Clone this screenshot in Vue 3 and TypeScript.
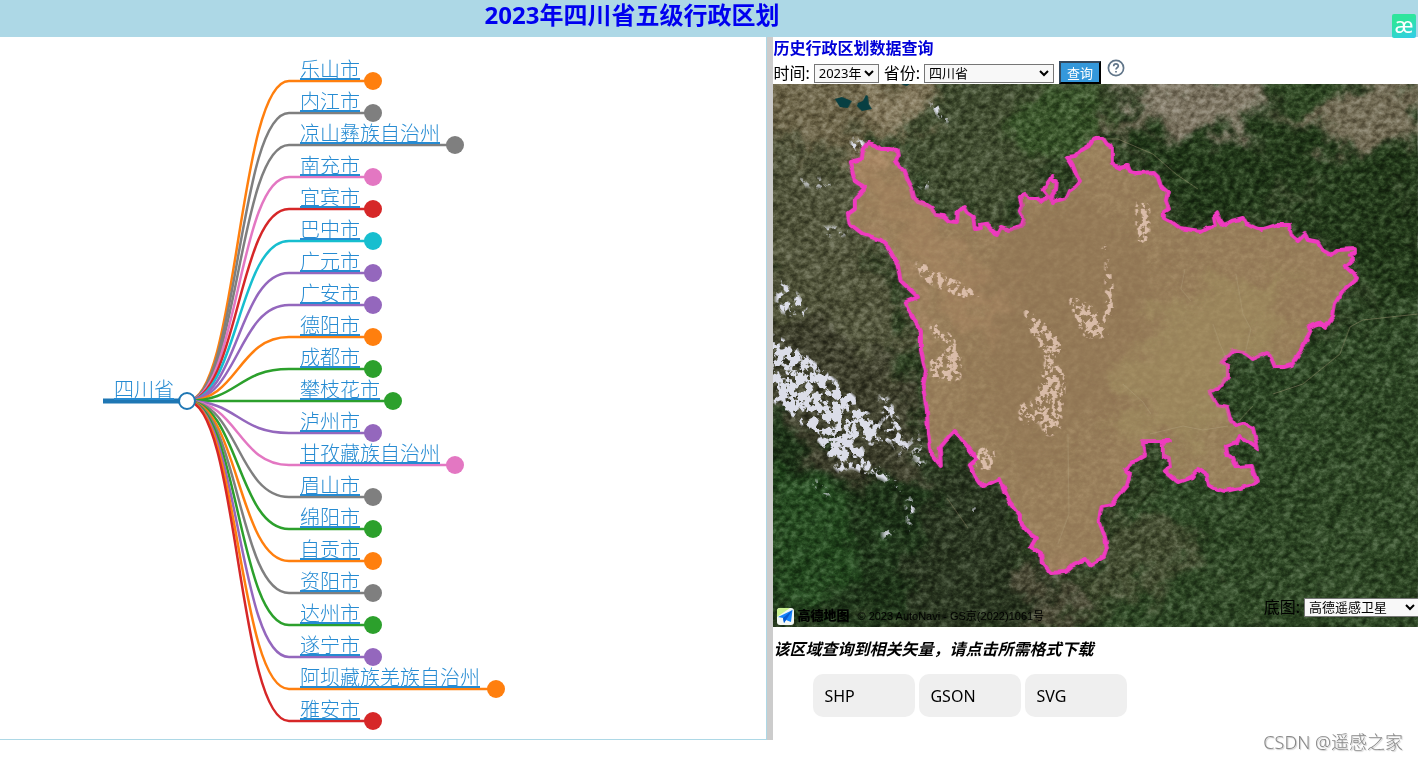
<script setup lang="ts">
import { ref } from 'vue'

interface City {
  name: string
  color: string
}

const orange = '#ff7f0e'
const gray = '#7f7f7f'
const pink = '#e377c2'
const red = '#d62728'
const cyan = '#17becf'
const purple = '#9467bd'
const green = '#2ca02c'

const cities: City[] = [
  { name: '乐山市', color: orange },
  { name: '内江市', color: gray },
  { name: '凉山彝族自治州', color: gray },
  { name: '南充市', color: pink },
  { name: '宜宾市', color: red },
  { name: '巴中市', color: cyan },
  { name: '广元市', color: purple },
  { name: '广安市', color: purple },
  { name: '德阳市', color: orange },
  { name: '成都市', color: green },
  { name: '攀枝花市', color: green },
  { name: '泸州市', color: purple },
  { name: '甘孜藏族自治州', color: pink },
  { name: '眉山市', color: gray },
  { name: '绵阳市', color: green },
  { name: '自贡市', color: orange },
  { name: '资阳市', color: gray },
  { name: '达州市', color: green },
  { name: '遂宁市', color: purple },
  { name: '阿坝藏族羌族自治州', color: orange },
  { name: '雅安市', color: red },
]

const rowStep = 32
const firstRow = 44
const rootY = firstRow + rowStep * 10
const rowY = (i: number) => firstRow + i * rowStep
const endX = (c: City) => Math.round(311 + c.name.length * 20.5)
const branch = (c: City, i: number) =>
  `M187 ${rootY}C238 ${rootY} 238 ${rowY(i)} 289 ${rowY(i)}H${endX(c)}`

const year = ref('2023年')
const province = ref('四川省')
const baseMap = ref('高德遥感卫星')
const formats = ['SHP', 'GSON', 'SVG']

const border =
  'M95 59L103 61 108 65 117 65 124 66 125 72 123 77 127 83 132 88 135 96 139 104 141 113 144 117 151 119 159 124 163 131 171 132 176 137 184 138 185 128 191 123 194 128 200 132 202 145 208 144 207 140 214 139 218 145 224 151 228 143 237 146 241 144 249 142 251 135 247 127 249 121 247 113 252 110 257 114 264 114 269 118 275 113 270 107 274 100 277 96 279 92 280 97 284 97 283 105 278 113 280 118 286 116 293 114 296 107 302 103 307 97 304 92 301 84 297 77 294 73 303 72 309 66 316 62 320 55 324 54 330 54 334 60 339 63 339 80 347 84 355 82 357 87 364 89 380 88 385 93 388 102 395 108 393 117 396 125 391 128 391 134 399 138 407 144 427 147 435 143 443 142 441 132 444 129 447 137 450 141 459 137 470 134 473 140 488 146 504 141 517 141 519 152 525 157 532 150 535 156 545 158 550 166 559 171 565 166 582 165 583 169 577 171 580 175 572 182 584 193 582 197 569 208 562 220 560 233 553 243 547 239 535 243 537 248 529 266 519 281 510 283 502 283 497 271 494 269 480 275 472 269 460 267 449 278 455 281 455 293 449 301 437 308 444 321 454 323 457 334 462 341 470 339 480 344 485 365 467 352 464 359 452 363 454 372 460 373 464 383 479 382 484 398 477 402 452 407 439 403 436 401 434 391 425 385 419 393 405 398 392 387 397 383 396 375 390 372 390 360 397 357 370 357 372 372 359 379 352 385 357 390 354 401 339 420 329 422 326 436 332 453 334 464 331 473 317 481 313 475 300 481 292 488 278 489 269 478 268 469 258 463 263 454 255 448 247 438 247 431 237 418 227 395 218 399 210 403 203 393 197 381 204 375 195 363 182 347 172 358 167 364 168 382 158 369 155 349 154 326 150 303 153 288 148 266 148 247 142 237 133 218 145 213 128 197 124 178 115 162 108 156 90 150 77 140 75 130 82 125 82 115 93 104 82 97 77 78 89 75 90 65Z'
</script>

<template>
  <div class="page">
    <header class="top">
      <h1>2023年四川省五级行政区划</h1>
      <button class="ext" type="button" aria-label="翻译">æ</button>
    </header>

    <main class="body">
      <section class="tree">
        <svg class="mind" aria-label="四川省">
          <path v-for="(c, i) in cities" :key="c.name" :d="branch(c, i)" :stroke="c.color" class="branch" />
          <path class="trunk" :d="`M103 ${rootY}H182`" />
          <circle class="root" cx="187" :cy="rootY" r="8" />
          <a href="#"><text class="label" x="114" :y="rootY - 4">四川省</text></a>
          <g v-for="(c, i) in cities" :key="c.name">
            <circle :cx="endX(c)" :cy="rowY(i)" r="9" :fill="c.color" />
            <a href="#"><text class="label" x="300" :y="rowY(i) - 4">{{ c.name }}</text></a>
          </g>
        </svg>
      </section>
      <div class="splitter"></div>

      <section class="query">
        <h2>历史行政区划数据查询</h2>
        <form class="filters" @submit.prevent>
          <label for="year">时间:</label>
          <select id="year" v-model="year" class="year">
            <option>2023年</option>
          </select>
          <label for="province">省份:</label>
          <select id="province" v-model="province" class="province">
            <option>四川省</option>
          </select>
          <button class="search" type="submit">查询</button>
          <svg class="help" viewBox="0 0 18 18" aria-label="帮助">
            <circle cx="9" cy="9" r="7.6" />
            <path d="M6.7 7.2C6.7 4.2 11.4 4.3 11.3 7C11.3 8.7 9 8.8 9 10.4" />
            <path d="M9 12V13.4" />
          </svg>
        </form>

        <div class="map">
          <svg class="sat" viewBox="0 0 645 543" preserveAspectRatio="xMidYMid slice" aria-hidden="true">
            <defs>
              <filter id="soft" x="-20%" y="-20%" width="140%" height="140%" color-interpolation-filters="sRGB">
                <feGaussianBlur stdDeviation="8" result="b" />
                <feTurbulence type="fractalNoise" baseFrequency="0.03" numOctaves="5" seed="8" />
                <feDisplacementMap in="b" scale="90" xChannelSelector="R" yChannelSelector="G" />
              </filter>
              <filter id="grain" x="0" y="0" width="100%" height="100%" color-interpolation-filters="sRGB">
                <feTurbulence type="fractalNoise" baseFrequency="0.16 0.2" numOctaves="5" seed="4" />
                <feColorMatrix values="0 1.8 0 0 -0.4  0 1.8 0 0 -0.4  0 1.8 0 0 -0.4  0 0 0 0 1" />
              </filter>
              <filter id="ridge" x="0" y="0" width="100%" height="100%" color-interpolation-filters="sRGB">
                <feTurbulence type="turbulence" baseFrequency="0.03 0.1" numOctaves="4" seed="12" />
                <feColorMatrix values="0 2 0 0 0  0 2 0 0 0  0 2 0 0 0  0 0 0 0 1" />
              </filter>
              <filter id="snow" x="-10%" y="-10%" width="120%" height="120%" color-interpolation-filters="sRGB">
                <feGaussianBlur in="SourceGraphic" stdDeviation="6" result="area" />
                <feTurbulence type="fractalNoise" baseFrequency="0.13 0.11" numOctaves="5" seed="21" />
                <feColorMatrix values="0 0 0 0 1  0 0 0 0 1  0 0 0 0 1  0 3 0 0 -0.9" result="n" />
                <feComposite in="area" in2="n" operator="arithmetic" k1="1" result="m" />
                <feComponentTransfer>
                  <feFuncR type="linear" slope="0" intercept="0.86" />
                  <feFuncG type="linear" slope="0" intercept="0.87" />
                  <feFuncB type="linear" slope="0" intercept="0.91" />
                  <feFuncA type="linear" slope="5" intercept="-1.9" />
                </feComponentTransfer>
              </filter>
              <filter id="peaks" x="-10%" y="-10%" width="120%" height="120%" color-interpolation-filters="sRGB">
                <feGaussianBlur in="SourceGraphic" stdDeviation="5" result="area" />
                <feTurbulence type="fractalNoise" baseFrequency="0.2 0.16" numOctaves="5" seed="5" />
                <feColorMatrix values="0 0 0 0 1  0 0 0 0 1  0 0 0 0 1  0 3 0 0 -0.9" result="n" />
                <feComposite in="area" in2="n" operator="arithmetic" k1="1" result="m" />
                <feComponentTransfer>
                  <feFuncR type="linear" slope="0" intercept="0.92" />
                  <feFuncG type="linear" slope="0" intercept="0.8" />
                  <feFuncB type="linear" slope="0" intercept="0.74" />
                  <feFuncA type="linear" slope="6" intercept="-2.8" />
                </feComponentTransfer>
              </filter>
              <filter id="jag" x="-5%" y="-5%" width="110%" height="110%" color-interpolation-filters="sRGB">
                <feTurbulence type="fractalNoise" baseFrequency="0.12" numOctaves="1" seed="3" />
                <feDisplacementMap in="SourceGraphic" scale="5" xChannelSelector="R" yChannelSelector="G" />
              </filter>
              <clipPath id="inside"><path :d="border" /></clipPath>
            </defs>

            <rect width="645" height="543" fill="#2b3d20" />
            <g filter="url(#soft)">
              <path fill="#6a6246" d="M-30-30H170L160 50 100 60 70 130-30 90Z" />
              <path fill="#877c60" d="M70-10L140 0 165 50 100 45Z" />
              <path fill="#4f5238" d="M-30 60L80 60 90 150 130 190 140 300-30 260Z" />
              <path fill="#3e4a2d" d="M165-20H350L330 50 290 80 240 140 150 120 130 60Z" />
              <path fill="#355026" d="M240 0H330V60L290 90 240 60Z" />
              <path fill="#7d7562" d="M350-20H480L480 20 455 60 435 85 410 60 375 40Z" />
              <path fill="#645e49" d="M325 30L400 45 430 90 420 105 380 70 330 50Z" />
              <path fill="#726b54" d="M490 30L570 10 600-10H670L640 45 605 65 560 60Z" />
              <path fill="#2b4320" d="M480-20H570L560 20 520 35Z" />
              <path fill="#1f3517" d="M450 50L640 70 660 230 600 230 550 150 400 130 340 60Z" />
              <path fill="#50573b" d="M480 116L560 108 520 122Z" />
              <path fill="#3b3c29" d="M-20 240L60 240 140 290 150 400 60 400-20 330Z" />
              <path fill="#1b3016" d="M-20 320L80 390 150 400 170 543H-20Z" />
              <path fill="#21451c" d="M-20 380L40 390 90 420 80 510 20 530-20 500Z" />
              <path fill="#26321d" d="M155 360L200 380 280 490 300 560H130Z" />
              <path fill="#2b4422" d="M470 270L600 230 670 220V560H330L350 430Z" />
              <path fill="#424b2f" d="M340 430L400 440 430 480 370 500 340 530 310 530Z" />
              <path fill="#484733" d="M250 490H310L300 560H250Z" />
            </g>

            <g class="ridges">
              <rect x="-300" y="-350" width="1250" height="1250" filter="url(#ridge)" transform="rotate(-52 322 271)" />
            </g>
            <rect class="grain" width="645" height="543" filter="url(#grain)" />

            <g filter="url(#snow)" fill="#fff">
              <path d="M-10 245L20 260 50 285 85 315 115 355 105 365 80 350 65 385 40 350 10 325-10 310Z" />
              <path d="M50 360L78 350 90 365 110 390 95 395 75 380 68 398Z" opacity=".9" />
              <path d="M100 300L120 315 138 365 130 385 112 345Z" opacity=".8" />
              <path d="M95 375L128 395 145 420 138 500 130 410 110 400Z" opacity=".8" />
              <path d="M140 335L150 345 156 385 142 400Z" opacity=".75" />
              <path d="M30 385L65 405 60 420 38 405Z" opacity=".7" />
              <path d="M10 90L70 90 60 110 20 105Z" opacity=".6" />
              <path d="M145 10L175 20 185 50 165 35Z" opacity=".8" />
              <path d="M75 50H95V70H75ZM140 90L165 95 155 110 142 105Z" opacity=".75" />
              <path d="M35 140H80V155H50ZM0 185L30 210 45 240 0 230Z" opacity=".7" />
              <path d="M105 440H125V460H105ZM195 415H210V440H195Z" opacity=".65" />
            </g>
            <path class="lake" d="M62 15L69 13 79 17 75 24 67 23ZM85 19L90 17 93 11 95 12 96 20 99 25 89 27 84 22ZM128 0H137L134 2Z" />

            <g filter="url(#jag)">
              <path class="region" :d="border" />
            </g>
            <g clip-path="url(#inside)">
              <g class="plain" filter="url(#soft)">
                <path fill="#a39762" d="M370 245L420 200 520 190 500 260 430 370 350 350 340 290Z" />
                <path fill="#a79967" d="M405 225L420 210 400 250 360 275Z" />
                <path fill="#8e7352" d="M210 140L310 110 400 180 370 250 320 330 270 390 210 330 190 230Z" />
                <path fill="#b28b67" d="M80 80L120 80 170 150 230 220 210 250 140 180Z" />
              </g>
              <g class="summits" filter="url(#peaks)" fill="#fff">
                <path d="M312 145L330 170 332 240 345 225 335 160ZM290 205L325 225 340 255 310 255Z" />
                <path d="M245 215L275 240 295 262 275 280 255 245ZM273 270L295 290 288 350 270 355 263 310Z" />
                <path d="M135 170L175 192 212 208 200 220 150 198ZM155 232L185 255 184 272 156 250Z" />
                <path d="M155 270L190 268 190 298 158 300ZM202 362H223V387H202ZM245 317H263V342H245Z" />
                <path d="M362 110L378 120 378 162 362 160Z" />
              </g>
              <path class="river" d="M412 185L408 205 418 217M463 190L470 230 478 245 472 270 M440 240L447 260 458 285 M350 300L370 318 378 330 M377 350L410 342 430 346 455 342M295 350L296 430 285 460" />
            </g>
            <path class="river" d="M645 230L590 236 577 243 567 270 530 300 500 310M331 55L345 55 380 70 403 90 425 105M480 322L465 338M174 414L195 444" />
          </svg>
          <div class="credit">
            <svg class="amap" viewBox="0 0 17 17" aria-hidden="true">
              <rect width="17" height="17" rx="3" fill="#f4f8f4" />
              <path d="M0 9V3Q0 0 3 0H13Z" fill="#c9f18f" />
              <path d="M1 9L15.5 2 14 14 9 12 7 15 6 10Z" fill="#1684fa" />
              <path d="M6 10L15.5 2 9 12 7 15Z" fill="#0759cf" />
            </svg>
            <b>高德地图</b>
            <span>© 2023 AutoNavi - GS京(2022)1061号</span>
          </div>
          <div class="basemap">
            <label for="basemap">底图:</label>
            <select id="basemap" v-model="baseMap">
              <option>高德遥感卫星</option>
            </select>
          </div>
        </div>

        <p class="message">该区域查询到相关矢量，请点击所需格式下载</p>
        <div class="formats">
          <button v-for="f in formats" :key="f" type="button">{{ f }}</button>
        </div>
      </section>
    </main>
    <footer class="sign">CSDN @遥感之家</footer>
  </div>
</template>

<style>
body {
  margin: 0;
  background: #fff;
}
</style>

<style scoped>
.page {
  font: 16px/22px "Noto Sans", "Noto Sans CJK SC", sans-serif;
  color: #000;
}
.page button,
.page select {
  font-family: inherit;
  box-sizing: border-box;
}
.page select {
  appearance: none;
  height: 19px;
  padding: 0 16px 0 4px;
  border: 1px solid #767676;
  border-radius: 0;
  background: #f8f8f8 url("data:image/svg+xml,%3Csvg xmlns='http://www.w3.org/2000/svg' width='10' height='7'%3E%3Cpath d='M1 1L5 5L9 1' fill='none' stroke='%23000' stroke-width='2'/%3E%3C/svg%3E") no-repeat right 4px center;
  color: #000;
  font-size: 13px;
  line-height: 17px;
}
.top {
  position: relative;
  height: 37px;
  background: lightblue;
}
h1 {
  margin: 0;
  padding-right: 154px;
  text-align: center;
  font-size: 24px;
  line-height: 30px;
  color: #0000f0;
}
.ext {
  position: absolute;
  right: 2px;
  top: 14px;
  z-index: 1;
  width: 24px;
  height: 24px;
  padding: 0 0 5px;
  border: 0;
  border-radius: 2px;
  background: linear-gradient(160deg, #2ee59d 30%, #32ccec);
  color: #fff;
  font-size: 22px;
  line-height: 18px;
}
.body {
  display: flex;
  height: 703px;
}
.tree {
  flex: 767 1 0;
  min-width: 0;
  border: solid lightblue;
  border-width: 0 1px 1px 0;
  box-sizing: border-box;
}
.mind {
  display: block;
  width: 100%;
  height: 100%;
}
.branch {
  fill: none;
  stroke-width: 2.5;
}
.trunk {
  stroke: #1f77b4;
  stroke-width: 5;
}
.root {
  fill: #fff;
  stroke: #1f77b4;
  stroke-width: 2;
}
.label {
  font: 300 20px "Noto Sans CJK SC", sans-serif;
  fill: #268bd2;
  text-decoration: underline;
  text-decoration-thickness: 1px;
  text-underline-offset: 0;
}
.splitter {
  flex: none;
  width: 6px;
  background: #ccc;
}
.query {
  flex: 645 1 0;
  min-width: 0;
}
h2 {
  margin: 0;
  font-size: 16px;
  line-height: 22px;
  color: #0000d8;
}
.filters {
  display: flex;
  align-items: flex-end;
  height: 25px;
}
.filters select {
  margin: 0 5px 1px 4px;
}
.filters .year {
  width: 65px;
}
.filters .province {
  width: 130px;
}
.search {
  width: 42px;
  height: 23px;
  padding: 0;
  border: 2px solid;
  border-color: #34495e #000 #000 #34495e;
  background: #3498db;
  color: #fff;
  font-size: 13px;
  line-height: 18px;
}
.help {
  width: 18px;
  height: 18px;
  margin: 0 0 7px 6px;
  fill: none;
  stroke: #607589;
  stroke-width: 1.7;
}
.map {
  position: relative;
  height: 543px;
  overflow: hidden;
}
.sat {
  display: block;
  width: 100%;
  height: 100%;
}
.ridges {
  mix-blend-mode: soft-light;
  opacity: 0.22;
}
.grain {
  mix-blend-mode: soft-light;
  opacity: 0.5;
}
.lake {
  fill: #083f42;
}
.region {
  fill: rgba(196, 153, 114, 0.7);
  stroke: #ef3abf;
  stroke-width: 4;
  stroke-linejoin: round;
}
.plain {
  opacity: 0.35;
}
.summits {
  opacity: 0.8;
}
.river {
  fill: none;
  stroke: #b9aa86;
  stroke-width: 1;
  opacity: 0.4;
}
.credit {
  position: absolute;
  left: 4px;
  bottom: 0;
  display: flex;
  align-items: center;
  height: 22px;
  font: 11px/20px "Liberation Sans", "Noto Sans CJK SC", sans-serif;
}
.amap {
  width: 17px;
  height: 17px;
  margin-right: 3px;
}
.credit b {
  margin-right: 8px;
  font-size: 13px;
  font-weight: 900;
}
.basemap {
  position: absolute;
  right: -2px;
  bottom: 9px;
  display: flex;
  align-items: center;
  gap: 4px;
}
.basemap select {
  width: 116px;
}
.message {
  margin: 11px 0 14px;
  font-weight: 700;
  font-style: italic;
}
.formats {
  display: flex;
  gap: 4px;
  padding-left: 40px;
}
.formats button {
  width: 102px;
  height: 43px;
  padding: 0 11px;
  border: 0;
  border-radius: 10px;
  background: #efefef;
  font-size: 16px;
  text-align: left;
}
.sign {
  height: 20px;
  padding-right: 15px;
  text-align: right;
  font-size: 18px;
  font-weight: 300;
  line-height: 4px;
  color: #888;
  text-shadow: 1px 1px 1px #ccc;
}
</style>
